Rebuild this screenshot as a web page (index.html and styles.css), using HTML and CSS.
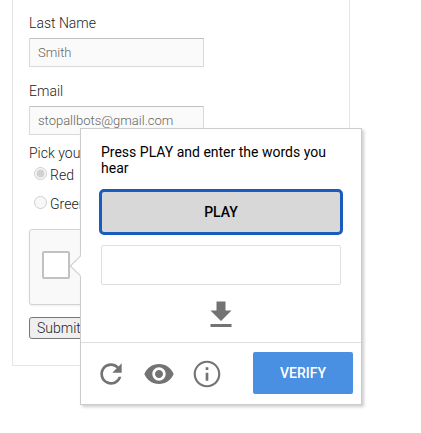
FILE: index.html
```
<!DOCTYPE html>
<html lang="en">
<head>
    <meta charset="UTF-8">
    <meta name="viewport" content="width=device-width, initial-scale=1.0">
    <title>Sample Form</title>
    <link rel="stylesheet" href="styles.css">
</head>
<body>
    <form class="sample-form">
        <label class="field-label" for="lastname">Last Name</label>
        <input class="jfk-textinput" type="text" id="lastname" value="Smith">
        <label class="field-label" for="email">Email</label>
        <input class="jfk-textinput" type="text" id="email" value="stopallbots@gmail.com">
        <p class="pick">Pick your</p>
        <label class="option"><input type="radio" name="color" checked disabled>Red</label>
        <label class="option"><input type="radio" name="color" disabled>Green</label>
        <div class="captcha">
            <input type="checkbox" id="anchor" aria-label="I'm not a robot">
            <div class="challenge">
                <div class="challenge-body">
                    <label class="instructions" for="response">Press PLAY and enter the words you hear</label>
                    <button class="play" type="button">PLAY</button>
                    <input class="response" type="text" id="response">
                    <a class="download" href="#" aria-label="Download audio">
                        <svg viewBox="0 0 24 24"><path d="M19 9h-4V3H9v6H5l7 7 7-7zM5 18v2h14v-2H5z"/></svg>
                    </a>
                </div>
                <div class="controls">
                    <button class="icon" type="button" aria-label="Get a new challenge">
                        <svg viewBox="0 0 24 24"><path d="M17.65 6.35C16.2 4.9 14.21 4 12 4c-4.42 0-7.99 3.58-7.99 8s3.57 8 7.99 8c3.73 0 6.84-2.55 7.73-6h-2.08c-.82 2.33-3.04 4-5.65 4-3.31 0-6-2.69-6-6s2.69-6 6-6c1.66 0 3.14.69 4.22 1.78L13 11h7V4l-2.35 2.35z"/></svg>
                    </button>
                    <button class="icon" type="button" aria-label="Get a visual challenge">
                        <svg viewBox="0 0 24 24"><path d="M12 4.5C7 4.5 2.73 7.61 1 12c1.73 4.39 6 7.5 11 7.5s9.27-3.11 11-7.5c-1.73-4.39-6-7.5-11-7.5zM12 17c-2.76 0-5-2.24-5-5s2.24-5 5-5 5 2.24 5 5-2.24 5-5 5zm0-8c-1.66 0-3 1.34-3 3s1.34 3 3 3 3-1.34 3-3-1.34-3-3-3z"/></svg>
                    </button>
                    <button class="icon" type="button" aria-label="Help">
                        <svg viewBox="0 0 24 24"><path d="M11 17h2v-6h-2v6zm1-15C6.48 2 2 6.48 2 12s4.48 10 10 10 10-4.48 10-10S17.52 2 12 2zm0 18.4c-4.63 0-8.4-3.77-8.4-8.4s3.77-8.4 8.4-8.4 8.4 3.77 8.4 8.4-3.77 8.4-8.4 8.4zM11 9h2V7h-2v2z"/></svg>
                    </button>
                    <button class="verify" type="button">VERIFY</button>
                </div>
            </div>
        </div>
        <button class="submit" type="submit">Submit</button>
    </form>
</body>
</html>
```
FILE: styles.css
```
* {
    box-sizing: border-box;
}
body {
    min-height: 100vh;
    margin: 0;
    background: #fff;
    color: #222;
    font-family: Roboto, sans-serif;
    font-size: 14px;
    font-weight: 300;
    line-height: 16px;
}
button, input {
    font: inherit;
}
.sample-form {
    max-width: 338px;
    margin-left: 12px;
    padding: 15px 16px 26px;
    border: 1px solid #e5e5e5;
    border-top: none;
}
.field-label {
    display: block;
    margin-bottom: 7px;
}
.jfk-textinput {
    display: block;
    width: 175px;
    height: 29px;
    margin-bottom: 16px;
    padding: 1px 8px;
    border: 1px solid #d9d9d9;
    border-top-color: #c0c0c0;
    border-radius: 1px;
    background: #fafafa;
    color: #666;
    font-size: 13px;
}
.pick {
    margin: -6px 0 -1px;
}
.option {
    display: flex;
    align-items: center;
    height: 29px;
}
.option input {
    width: 13px;
    height: 13px;
    margin: 0 3px 2px 5px;
}
.captcha {
    position: relative;
    height: 76px;
    margin-top: 11px;
    padding: 21px 12px;
    border: 1px solid #d3d3d3;
    border-radius: 3px;
    background: #f9f9f9;
    box-shadow: 0 1px 2px rgba(0, 0, 0, 0.08);
}
.captcha input[type="checkbox"] {
    display: block;
    width: 28px;
    height: 28px;
    margin: 0;
    border: 2px solid #c1c1c1;
    border-radius: 2px;
    background: #fff;
    appearance: none;
}
.submit {
    display: block;
    height: 22px;
    margin-top: 12px;
    padding: 0 7px;
    border: 1px solid #767676;
    border-radius: 3px;
    background: #efefef;
    color: #222;
}

/* challenge bubble, opens over the form */
.challenge {
    position: absolute;
    top: -102px;
    left: 50px;
    width: 282px;
    border: 1px solid #ccc;
    background: #fff;
    box-shadow: 2px 2px 3px rgba(0, 0, 0, 0.2);
    color: #000;
    font-weight: 400;
}
.challenge::before {
    content: "";
    position: absolute;
    top: 129px;
    left: -8px;
    width: 15px;
    height: 15px;
    border: 1px solid #ccc;
    border-top: none;
    border-right: none;
    background: #fff;
    transform: rotate(45deg);
}
.challenge-body {
    position: relative;
    padding: 15px 20px 9px;
    background: #fff;
}
.instructions {
    display: block;
}
.play {
    display: block;
    width: 100%;
    height: 42px;
    margin-top: 15px;
    border: none;
    border-radius: 3px;
    outline: 3px solid #1a5bbf;
    outline-offset: -1px;
    background: #d8d8d8;
    color: #000;
    font-weight: 500;
}
.response {
    display: block;
    width: 100%;
    height: 40px;
    margin: 12px 0;
    padding: 0 8px;
    border: 1px solid #dfdfdf;
    border-radius: 2px;
    background: #fff;
}
.download {
    display: block;
    width: 36px;
    height: 36px;
    margin: 0 auto;
}
svg {
    display: block;
    fill: #737373;
}
.controls {
    display: flex;
    gap: 16px;
    align-items: center;
    height: 62px;
    padding: 0 8px 0 14px;
    border-top: 1px solid #dfdfdf;
}
.icon {
    width: 32px;
    height: 32px;
    padding: 0;
    border: none;
    background: none;
}
.verify {
    width: 100px;
    height: 42px;
    margin: 0 0 2px auto;
    border: none;
    border-radius: 2px;
    background: #4a90e2;
    color: #fff;
    font-weight: 500;
}
```
